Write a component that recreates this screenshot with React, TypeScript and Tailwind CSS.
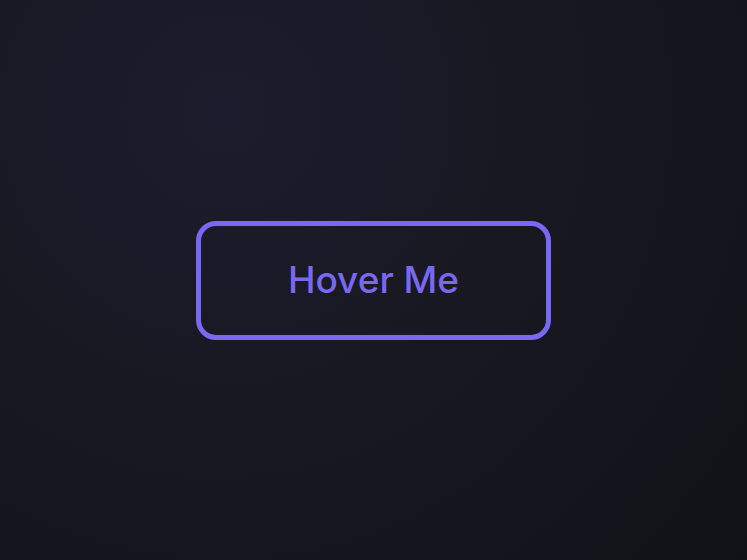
import React from "react";

export default function App() {
  return (
    <div className="w-[747px] h-[560px] flex items-center justify-center bg-[radial-gradient(circle_at_30%_20%,#1d1c2e_0%,#17171f_55%,#111118_100%)]">
      <button
        className="w-[355px] h-[119px] rounded-[20px] border-[5px] border-[#7868f2] bg-transparent flex items-center justify-center text-[#7868f2] text-[37px] font-medium"
        style={{ fontFamily: "Inter, 'Noto Sans', sans-serif" }}
      >
        Hover Me
      </button>
    </div>
  );
}
